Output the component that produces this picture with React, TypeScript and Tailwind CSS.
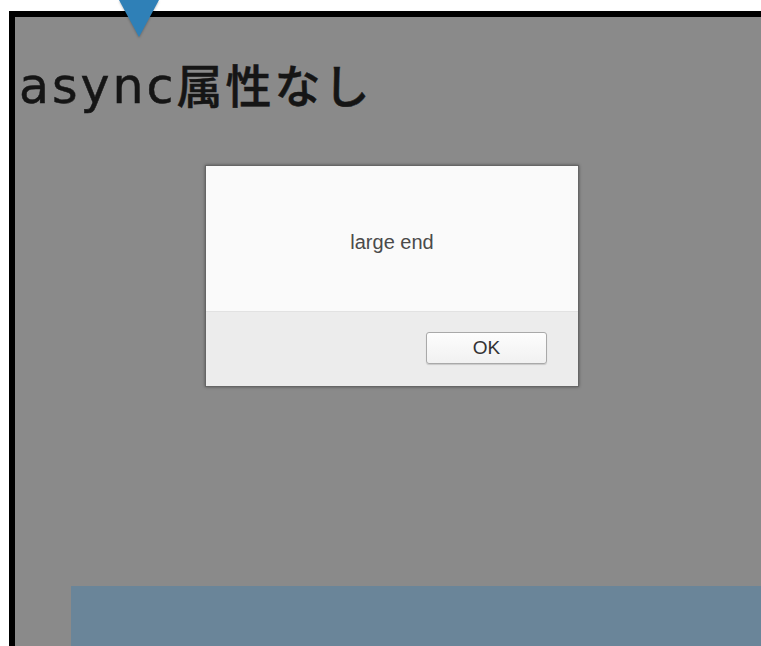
import React from 'react';

// alert() dialog shown on top of a page whose script has no async attribute
function AlertBox({ message }: { message: string }) {
  return (
    <div className="ml-[190px] mt-[57px] w-[374px] h-[222px] shrink-0 flex flex-col border border-[#666] shadow-[0_0_3px_rgba(0,0,0,0.4)]">
      <div className="flex-1 bg-[#fafafa] flex items-center justify-center pt-[6px]">
        <span className="text-[20px] text-[#4a4a4a] font-['Liberation_Sans',sans-serif]">{message}</span>
      </div>
      <div className="h-[75px] bg-[#ececec] border-t border-[#e2e2e2] flex justify-end items-start pt-[20px] pr-[31px]">
        <button className="w-[121px] h-[32px] rounded-[3px] border border-[#a9a9a9] bg-gradient-to-b from-[#fdfdfd] to-[#f1f1f1] shadow-[0_1px_1px_rgba(0,0,0,0.15)] text-[19px] text-[#333] font-['Liberation_Sans',sans-serif] flex items-center justify-center">
          OK
        </button>
      </div>
    </div>
  );
}

export default function App() {
  return (
    <div className="relative h-[646px] w-[761px] overflow-hidden bg-white pt-[11px] pl-[9px]">
      {/* callout arrow pointing down at the heading */}
      <svg className="absolute left-[119px] top-0 z-10 drop-shadow-[0_1px_1px_rgba(0,0,0,0.25)]" width="40" height="38" viewBox="0 0 40 38">
        <polygon points="0,0 40,0 20,37" fill="#2f80b7" />
      </svg>

      <div className="h-full flex flex-col border-t-[6px] border-l-[6px] border-black bg-[#8a8a8a]">
        <h1 className="mt-[43px] ml-[4px] h-[48px] flex items-baseline leading-none text-[#151515] whitespace-nowrap [-webkit-text-stroke:0.5px_#151515]">
          <span className="text-[49px] tracking-[3px] font-['DejaVu_Sans',sans-serif]">async</span>
          <span className="text-[46px] tracking-[3px] font-medium font-['Noto_Sans_CJK_JP',sans-serif]">属性なし</span>
        </h1>

        <AlertBox message="large end" />

        <div className="mt-[199px] ml-[56px] flex-1 bg-[#6a8599]" />
      </div>
    </div>
  );
}
